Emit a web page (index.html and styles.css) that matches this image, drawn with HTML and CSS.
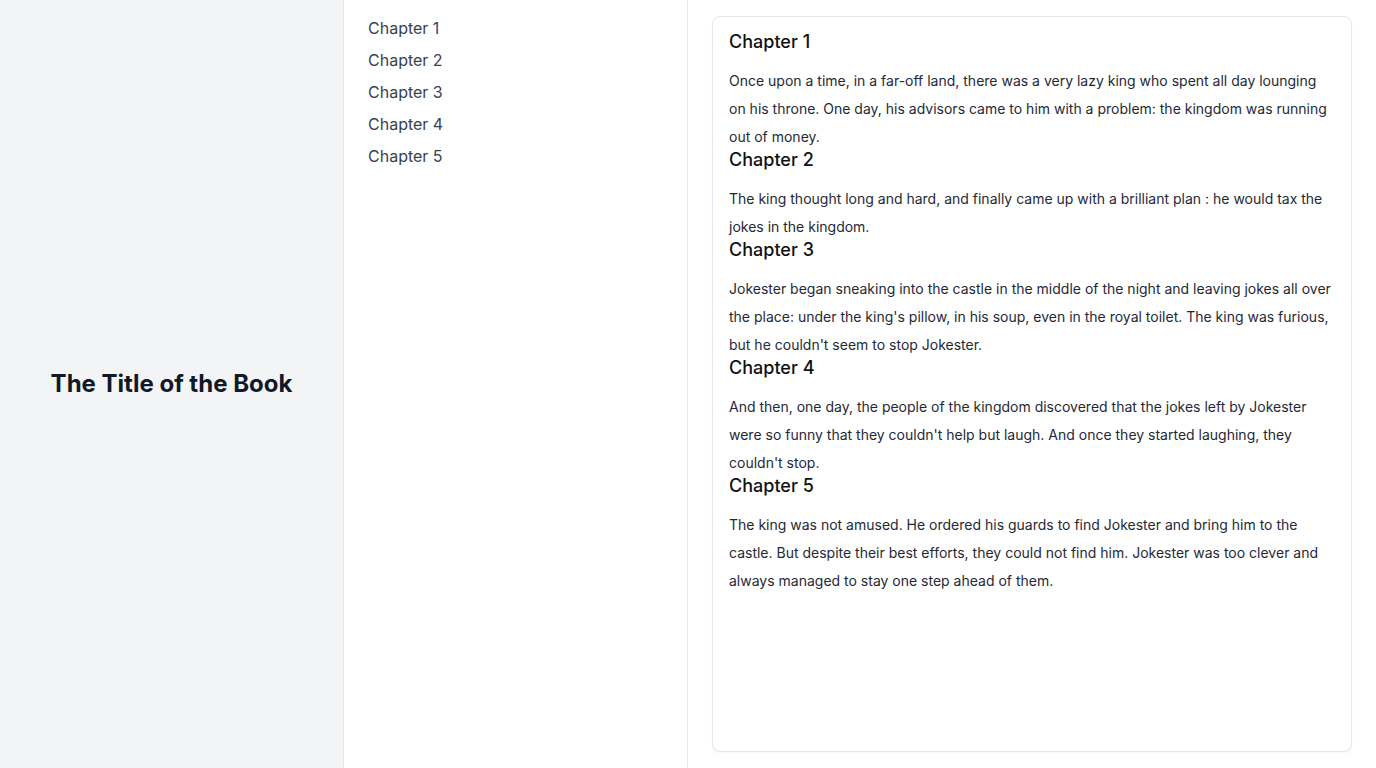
FILE: index.html
```html
<!DOCTYPE html>
<html lang="en">
<head>
<meta charset="utf-8">
<title>The Title of the Book</title>
<link rel="stylesheet" href="styles.css">
</head>
<body>
<div class="layout">
  <aside class="cover">
    <h1 class="book-title">The Title of the Book</h1>
  </aside>
  <nav class="toc">
    <a class="toc-link" href="#c1">Chapter 1</a>
    <a class="toc-link" href="#c2">Chapter 2</a>
    <a class="toc-link" href="#c3">Chapter 3</a>
    <a class="toc-link" href="#c4">Chapter 4</a>
    <a class="toc-link" href="#c5">Chapter 5</a>
  </nav>
  <main class="reader">
    <article class="card">
      <section class="chapter" id="c1">
        <h2 class="chapter-title">Chapter 1</h2>
        <p class="chapter-text">Once upon a time, in a far-off land, there was a very lazy king who spent all day lounging on his throne. One day, his advisors came to him with a problem: the kingdom was running out of money.</p>
      </section>
      <section class="chapter" id="c2">
        <h2 class="chapter-title">Chapter 2</h2>
        <p class="chapter-text">The king thought long and hard, and finally came up with a brilliant plan : he would tax the jokes in the kingdom.</p>
      </section>
      <section class="chapter" id="c3">
        <h2 class="chapter-title">Chapter 3</h2>
        <p class="chapter-text">Jokester began sneaking into the castle in the middle of the night and leaving jokes all over the place: under the king's pillow, in his soup, even in the royal toilet. The king was furious, but he couldn't seem to stop Jokester.</p>
      </section>
      <section class="chapter" id="c4">
        <h2 class="chapter-title">Chapter 4</h2>
        <p class="chapter-text">And then, one day, the people of the kingdom discovered that the jokes left by Jokester were so funny that they couldn't help but laugh. And once they started laughing, they couldn't stop.</p>
      </section>
      <section class="chapter" id="c5">
        <h2 class="chapter-title">Chapter 5</h2>
        <p class="chapter-text">The king was not amused. He ordered his guards to find Jokester and bring him to the castle. But despite their best efforts, they could not find him. Jokester was too clever and always managed to stay one step ahead of them.</p>
      </section>
    </article>
  </main>
</div>
</body>
</html>
```

FILE: styles.css
```css
* {
  box-sizing: border-box;
}

html, body {
  margin: 0;
  padding: 0;
  height: 100%;
}

body {
  font-family: Inter, "Noto Sans", "Liberation Sans", sans-serif;
  background: #ffffff;
  color: #111827;
}

.layout {
  display: grid;
  grid-template-columns: 344px 344px 1fr;
  height: 768px;
}

.cover {
  background: #f3f4f6;
  border-right: 1px solid #e5e7eb;
  display: flex;
  align-items: center;
  justify-content: center;
}

.book-title {
  margin: 0;
  font-size: 24px;
  line-height: 32px;
  font-weight: 700;
  color: #111827;
}

.toc {
  border-right: 1px solid #e5e7eb;
  padding: 16px 24px;
  display: flex;
  flex-direction: column;
  gap: 8px;
}

.toc-link {
  font-size: 16px;
  line-height: 24px;
  color: #374151;
  text-decoration: none;
}

.reader {
  padding: 16px 24px;
  display: flex;
}

.card {
  flex: 1;
  border: 1px solid #e5e7eb;
  border-radius: 8px;
  padding: 16px;
  background: #ffffff;
  box-shadow: 0 1px 2px rgba(0, 0, 0, 0.04);
}

.chapter-title {
  margin: 0 0 16px;
  font-size: 18px;
  line-height: 18px;
  font-weight: 500;
  color: #111111;
}

.chapter-text {
  margin: 0;
  font-size: 14px;
  line-height: 28px;
  color: #1f2937;
}
```
